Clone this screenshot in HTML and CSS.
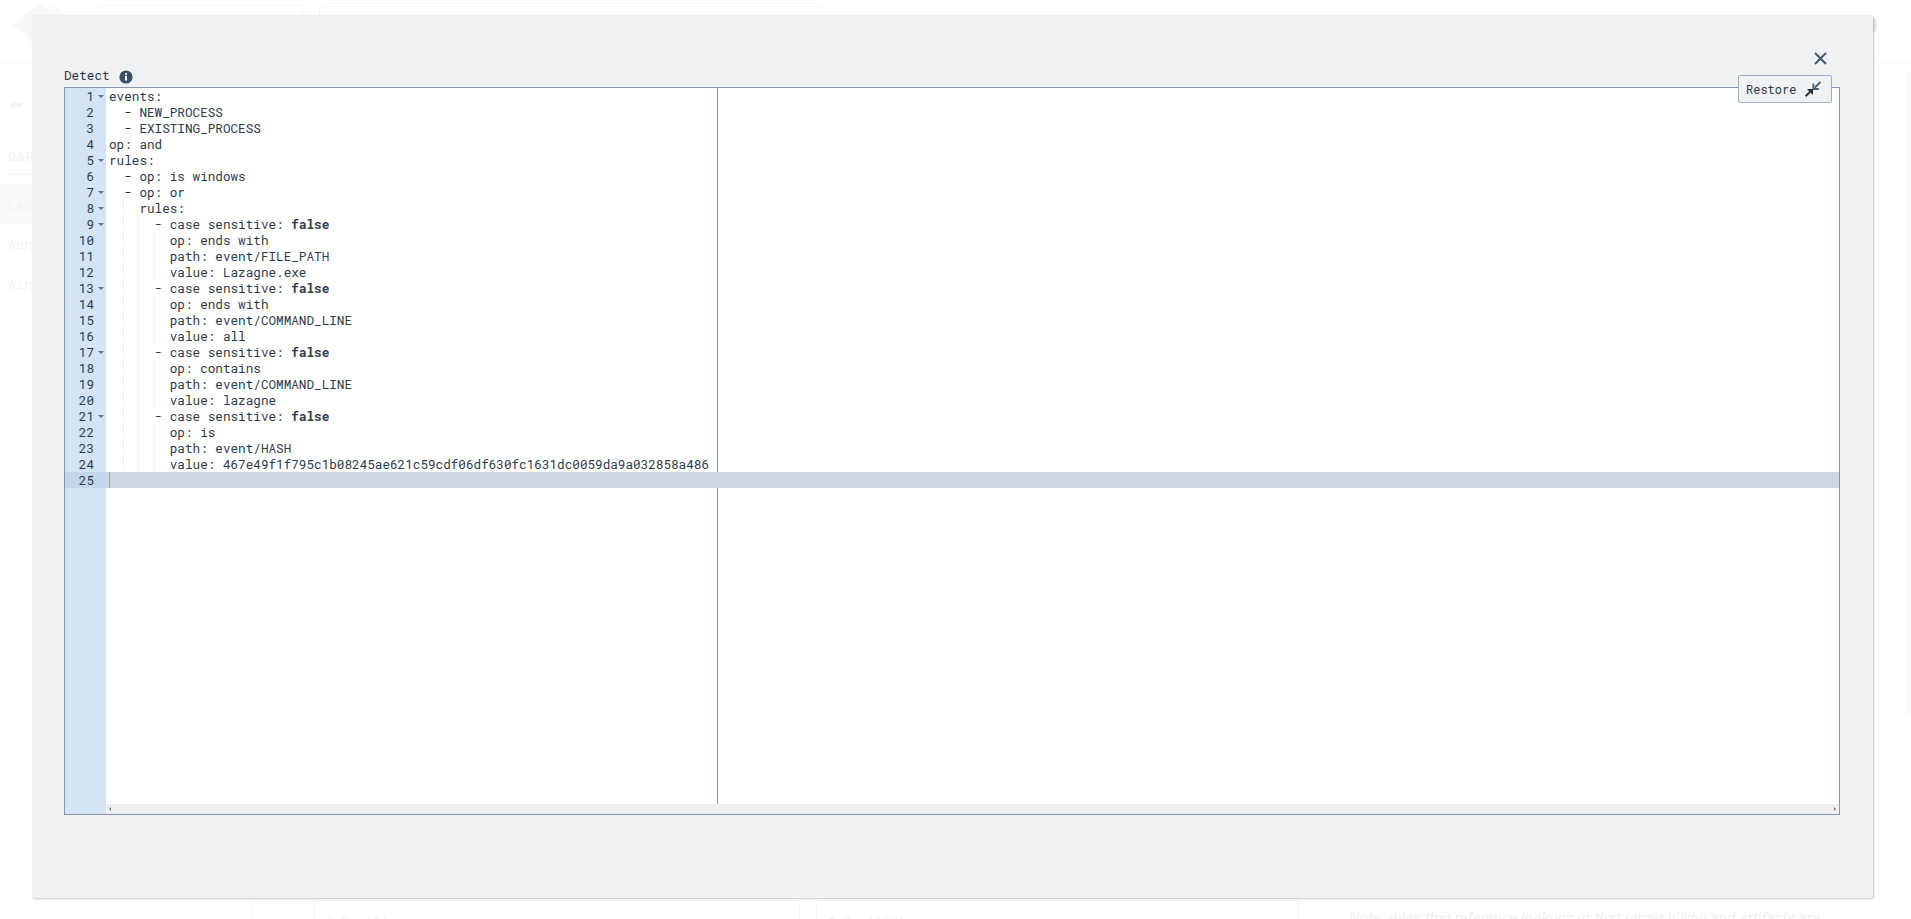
FILE: index.html
```html
<!DOCTYPE html>
<html lang="en">
<head>
<meta charset="utf-8">
<title>Detect</title>
<link rel="stylesheet" href="styles.css">
</head>
<body>
<div class="app">
  <header class="app-head">
    <svg class="logo" width="66" height="46" viewBox="0 0 66 46"><polygon points="40,0 63,23 40,46 17,23" fill="#f9fafb"/><polygon points="27,0 50,23 27,46 0,23" fill="#f7f8fa"/></svg>
    <div class="field field-a"></div>
    <div class="field field-b"></div>
    <div class="avatar"></div>
  </header>
  <div class="app-body">
    <aside class="side">
      <div class="back"><svg width="12" height="10" viewBox="0 0 12 10"><path d="M0 5L5 0V3H12V7H5V10Z" fill="#f2f3f4"/></svg></div>
      <div class="side-title">D&amp;R Rules</div>
      <div class="side-row on">Lazagne</div>
      <div class="side-row">WannaCry</div>
      <div class="side-row">Windows</div>
    </aside>
    <main class="cards">
      <div class="stub"></div>
      <div class="card">1 2  '1'</div>
      <div class="card card-b">1 2  '100'</div>
      <p class="note">Note: rules that reference lookups or that target billing and artifacts are</p>
    </main>
    <div class="rail"></div>
  </div>
</div>

<section class="modal">
  <button class="close" aria-label="Close">
    <svg width="13" height="13" viewBox="0 0 13 13"><path d="M1 1l11 11M12 1L1 12" stroke="#44576a" stroke-width="1.9" fill="none"/></svg>
  </button>
  <div class="label">
    <span>Detect</span>
    <svg class="info" width="14" height="14" viewBox="0 0 14 14"><circle cx="7" cy="7" r="6.6" fill="#3d5063"/><rect x="6" y="6" width="2" height="4.6" fill="#fff"/><circle cx="7" cy="4.1" r="1.1" fill="#fff"/></svg>
  </div>
  <div class="editor">
    <button class="restore">
      <span>Restore</span>
      <svg width="16" height="16" viewBox="0 0 16 16"><path d="M15.5 1L9.8 6.7" stroke="#46586b" stroke-width="1.8" fill="none"/><path d="M8.4 2.6V8H13.8" stroke="#46586b" stroke-width="1.8" fill="none"/><path d="M.6 15.2L6.4 9.4" stroke="#1f2c3a" stroke-width="2" fill="none"/><path d="M8 8V14L2 8Z" fill="#1f2c3a"/></svg>
    </button>
    <div class="gutter">
      <div class="num fold">1</div>
      <div class="num">2</div>
      <div class="num">3</div>
      <div class="num">4</div>
      <div class="num fold">5</div>
      <div class="num">6</div>
      <div class="num fold">7</div>
      <div class="num fold">8</div>
      <div class="num fold">9</div>
      <div class="num">10</div>
      <div class="num">11</div>
      <div class="num">12</div>
      <div class="num fold">13</div>
      <div class="num">14</div>
      <div class="num">15</div>
      <div class="num">16</div>
      <div class="num fold">17</div>
      <div class="num">18</div>
      <div class="num">19</div>
      <div class="num">20</div>
      <div class="num fold">21</div>
      <div class="num">22</div>
      <div class="num">23</div>
      <div class="num">24</div>
      <div class="num now">25</div>
    </div>
    <div class="pane">
      <div class="code">
        <div class="margin"></div>
        <div class="ln">events:</div>
        <div class="ln">  - NEW_PROCESS</div>
        <div class="ln">  - EXISTING_PROCESS</div>
        <div class="ln">op: and</div>
        <div class="ln">rules:</div>
        <div class="ln">  - op: is windows</div>
        <div class="ln">  - op: or</div>
        <div class="ln"><i class="g"></i>  rules:</div>
        <div class="ln"><i class="g"></i><i class="g"></i>  - case sensitive: <b>false</b></div>
        <div class="ln"><i class="g"></i><i class="g"></i><i class="g"></i>  op: ends with</div>
        <div class="ln"><i class="g"></i><i class="g"></i><i class="g"></i>  path: event/FILE_PATH</div>
        <div class="ln"><i class="g"></i><i class="g"></i><i class="g"></i>  value: Lazagne.exe</div>
        <div class="ln"><i class="g"></i><i class="g"></i>  - case sensitive: <b>false</b></div>
        <div class="ln"><i class="g"></i><i class="g"></i><i class="g"></i>  op: ends with</div>
        <div class="ln"><i class="g"></i><i class="g"></i><i class="g"></i>  path: event/COMMAND_LINE</div>
        <div class="ln"><i class="g"></i><i class="g"></i><i class="g"></i>  value: all</div>
        <div class="ln"><i class="g"></i><i class="g"></i>  - case sensitive: <b>false</b></div>
        <div class="ln"><i class="g"></i><i class="g"></i><i class="g"></i>  op: contains</div>
        <div class="ln"><i class="g"></i><i class="g"></i><i class="g"></i>  path: event/COMMAND_LINE</div>
        <div class="ln"><i class="g"></i><i class="g"></i><i class="g"></i>  value: lazagne</div>
        <div class="ln"><i class="g"></i><i class="g"></i>  - case sensitive: <b>false</b></div>
        <div class="ln"><i class="g"></i><i class="g"></i><i class="g"></i>  op: is</div>
        <div class="ln"><i class="g"></i><i class="g"></i><i class="g"></i>  path: event/HASH</div>
        <div class="ln"><i class="g"></i><i class="g"></i><i class="g"></i>  value: 467e49f1f795c1b08245ae621c59cdf06df630fc1631dc0059da9a032858a486</div>
        <div class="ln active"><span class="caret"></span></div>
      </div>
      <div class="hbar"><span class="arrow left"></span><span class="arrow right"></span></div>
    </div>
  </div>
</section>
</body>
</html>
```
FILE: styles.css
```css
* { box-sizing: border-box; }
html, body { margin: 0; height: 100%; }
body {
  position: relative;
  width: 1911px;
  height: 919px;
  overflow: hidden;
  background: #fff;
  font-family: "Roboto Mono", "DejaVu Sans Mono", monospace;
  font-size: 12.67px;
  line-height: 16px;
  color: #2c3a4a;
}

/* faded application behind the dialog */
.app { display: flex; flex-direction: column; height: 919px; color: #f3f3f4; }
.app-head {
  display: flex;
  align-items: flex-start;
  height: 63px;
  padding: 2px 34px 0 13px;
  border-bottom: 1px solid #f8f8f8;
}
.logo { flex: none; }
.field { height: 56px; margin-top: 3px; border: 1px solid #f6f6f6; border-radius: 2px; }
.field-a { width: 204px; margin-left: 20px; }
.field-b { width: 501px; margin-left: 16px; margin-top: 4px; }
.avatar {
  width: 16px;
  height: 15px;
  margin: 16px 0 0 auto;
  border-radius: 5px;
  background: #ebebed;
}
.app-body { flex: 1; display: flex; min-height: 0; }
.side { width: 252px; flex: none; padding-top: 34px; }
.back { padding-left: 10px; height: 47px; }
.side-title {
  margin: 0 0 9px 8px;
  padding: 4px 0 10px;
  border-bottom: 1px solid #f5f5f5;
  font-weight: 700;
  letter-spacing: 1.4px;
  color: #f2f3f4;
}
.side-row { height: 40px; padding: 12px 0 0 8px; font-size: 13px; letter-spacing: .3px; }
.side-row.on { background: #fafafa; }
.cards { flex: 1; display: flex; align-items: flex-end; min-width: 0; }
.stub { width: 62px; height: 19px; border: 1px solid #fafafa; border-right: 0; border-bottom: 0; }
.card {
  width: 486px;
  height: 19px;
  padding: 12px 0 0 11px;
  margin-right: 16px;
  border: 1px solid #f5f6f7;
  border-bottom: 0;
  font-size: 13px;
  color: #f0f0f0;
  white-space: pre;
}
.card-b { width: 483px; margin-right: 0; }
.note {
  height: 19px;
  margin: 0 0 0 50px;
  padding-top: 8px;
  font: italic 15.4px/20px Roboto, "Liberation Sans", sans-serif;
  color: #f0f0f0;
  white-space: nowrap;
}
.rail {
  position: absolute;
  right: 0;
  top: 72px;
  width: 6px;
  height: 644px;
  background: #fafafa;
}

/* dialog */
.modal {
  position: absolute;
  left: 32px;
  top: 15px;
  width: 1841px;
  height: 883px;
  padding: 52px 33px 0 32px;
  background: #f0f1f3;
  border-radius: 2px;
  box-shadow: 1px 1px 2px rgba(0, 0, 0, .22);
}
.close {
  position: absolute;
  right: 46px;
  top: 37px;
  display: flex;
  padding: 0;
  border: 0;
  background: none;
}
.label { display: flex; align-items: flex-start; gap: 9px; height: 20px; }
.info { margin-top: 3px; }
.editor {
  position: relative;
  display: flex;
  width: 1776px;
  height: 728px;
  border: 1px solid #8596aa;
  background: #fff;
}
.restore {
  position: absolute;
  right: 7px;
  top: -13px;
  display: flex;
  align-items: center;
  gap: 9px;
  width: 94px;
  height: 28px;
  padding: 0 7px;
  border: 1px solid #9dafc0;
  border-radius: 2px;
  background: #f0f1f3;
  font-family: inherit;
  font-size: 12px;
  color: #2c3a4a;
}
.gutter { width: 41px; flex: none; background: #d3e4f5; color: #2c3a4a; }
.num { position: relative; height: 16px; padding-right: 12px; text-align: right; }
.num.fold::after {
  content: "";
  position: absolute;
  left: 33px;
  top: 6.5px;
  border-top: 3.5px solid #68788a;
  border-left: 3px solid transparent;
  border-right: 3px solid transparent;
}
.num.now { background: #c3d7ea; }
.pane { flex: 1; display: flex; flex-direction: column; min-width: 0; }
.code { position: relative; flex: 1; min-height: 0; }
.margin { position: absolute; left: 611px; top: 0; bottom: 0; width: 1px; background: #8596aa; }
.ln { position: relative; height: 16px; padding-left: 3px; white-space: pre; }
.ln b { font-weight: 700; }
.g {
  display: inline-block;
  width: 2ch;
  height: 16px;
  vertical-align: top;
  border-right: 1px dotted #e2e2e2;
  font-style: normal;
}
.active { background: #ced6df; }
.caret { display: inline-block; width: 1px; height: 16px; vertical-align: top; background: #a9a9a9; }
.hbar {
  display: flex;
  justify-content: space-between;
  align-items: center;
  flex: none;
  height: 10px;
  padding: 0 3px;
  background: #efefef;
}
.arrow { width: 0; height: 0; border-top: 2px solid transparent; border-bottom: 2px solid transparent; }
.arrow.left { border-right: 2px solid #777; }
.arrow.right { border-left: 2px solid #777; }
```
